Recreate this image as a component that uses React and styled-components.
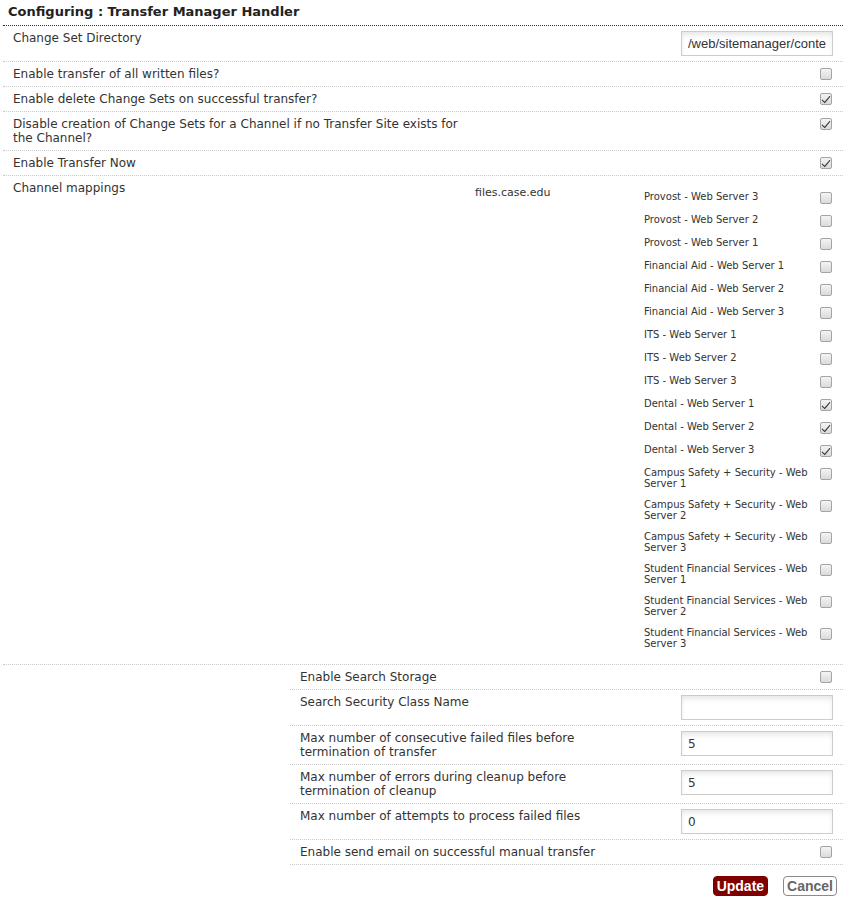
import React from "react";
import styled, { createGlobalStyle } from "styled-components";

const channels = [
  { name: "Provost - Web Server 3", on: false },
  { name: "Provost - Web Server 2", on: false },
  { name: "Provost - Web Server 1", on: false },
  { name: "Financial Aid - Web Server 1", on: false },
  { name: "Financial Aid - Web Server 2", on: false },
  { name: "Financial Aid - Web Server 3", on: false },
  { name: "ITS - Web Server 1", on: false },
  { name: "ITS - Web Server 2", on: false },
  { name: "ITS - Web Server 3", on: false },
  { name: "Dental - Web Server 1", on: true },
  { name: "Dental - Web Server 2", on: true },
  { name: "Dental - Web Server 3", on: true },
  { name: "Campus Safety + Security - Web Server 1", on: false },
  { name: "Campus Safety + Security - Web Server 2", on: false },
  { name: "Campus Safety + Security - Web Server 3", on: false },
  { name: "Student Financial Services - Web Server 1", on: false },
  { name: "Student Financial Services - Web Server 2", on: false },
  { name: "Student Financial Services - Web Server 3", on: false },
];

const Check = ({ on }) => (
  <CheckBox>
    {on && (
      <svg width="10" height="10" viewBox="0 0 10 10">
        <path d="M1.2 5.4 L3.6 7.8 L8.8 1.8 L9.4 2.6 L3.8 9.2 L0.6 6.2 Z" fill="#2b2b2b" />
      </svg>
    )}
  </CheckBox>
);

const App = () => {
  return (
    <>
      <GlobalStyle />
      <Page>
        <Title>Configuring : Transfer Manager Handler</Title>

        <Row>
          <Label>Change Set Directory</Label>
          <Control>
            <TextInput $wide defaultValue="/web/sitemanager/conte" />
          </Control>
        </Row>
        <Row>
          <Label>Enable transfer of all written files?</Label>
          <Control>
            <Check />
          </Control>
        </Row>
        <Row>
          <Label>Enable delete Change Sets on successful transfer?</Label>
          <Control>
            <Check on />
          </Control>
        </Row>
        <Row>
          <Label>
            Disable creation of Change Sets for a Channel if no Transfer Site
            exists for the Channel?
          </Label>
          <Control>
            <Check on />
          </Control>
        </Row>
        <Row>
          <Label>Enable Transfer Now</Label>
          <Control>
            <Check on />
          </Control>
        </Row>
        <Row>
          <Label>Channel mappings</Label>
          <Mapping>
            <Site>files.case.edu</Site>
            <ChannelList>
              {channels.map((c) => (
                <ChannelItem key={c.name}>
                  <ChannelName>{c.name}</ChannelName>
                  <ChannelCheck>
                    <Check on={c.on} />
                  </ChannelCheck>
                </ChannelItem>
              ))}
            </ChannelList>
          </Mapping>
        </Row>

        <SubTable>
          <SubRow>
            <Label>Enable Search Storage</Label>
            <Control>
              <Check />
            </Control>
          </SubRow>
          <SubRow>
            <Label>Search Security Class Name</Label>
            <Control>
              <TextInput defaultValue="" />
            </Control>
          </SubRow>
          <SubRow>
            <Label>
              Max number of consecutive failed files before termination of
              transfer
            </Label>
            <Control>
              <TextInput defaultValue="5" />
            </Control>
          </SubRow>
          <SubRow>
            <Label>
              Max number of errors during cleanup before termination of cleanup
            </Label>
            <Control>
              <TextInput defaultValue="5" />
            </Control>
          </SubRow>
          <SubRow>
            <Label>Max number of attempts to process failed files</Label>
            <Control>
              <TextInput defaultValue="0" />
            </Control>
          </SubRow>
          <SubRow>
            <Label>Enable send email on successful manual transfer</Label>
            <Control>
              <Check />
            </Control>
          </SubRow>
        </SubTable>

        <Buttons>
          <Button $primary>Update</Button>
          <Button>Cancel</Button>
        </Buttons>
      </Page>
    </>
  );
};

export default App;

const GlobalStyle = createGlobalStyle`
  body {
    margin: 0;
    background: #fff;
    font-family: "DejaVu Sans", Verdana, sans-serif;
    color: #333;
  }
`;

const Page = styled.div`
  width: 840px;
  margin-left: 3px;
  padding-bottom: 20px;
`;

const Title = styled.h1`
  margin: 0;
  height: 26px;
  padding: 4px 5px 0;
  box-sizing: border-box;
  font-size: 13px;
  line-height: 16px;
  font-weight: bold;
  color: #222;
  border-bottom: 1px dotted #7a1010;
`;

const Row = styled.div`
  display: grid;
  grid-template-columns: 467px 1fr;
  border-bottom: 1px dotted #c8c8c8;
`;

const Label = styled.div`
  padding: 5px 10px;
  font-size: 12px;
  line-height: 14px;
`;

const Control = styled.div`
  padding: 5px 10px 5px 0;
  display: flex;
  justify-content: flex-end;
  align-items: flex-start;
`;

const CheckBox = styled.span`
  display: inline-flex;
  align-items: center;
  justify-content: center;
  width: 12px;
  height: 12px;
  margin: 1px 1px 0 0;
  box-sizing: border-box;
  border: 1px solid #a4a4a4;
  border-radius: 2px;
  background: linear-gradient(#f4f4f4, #dadada);
`;

const TextInput = styled.input`
  width: 152px;
  height: 25px;
  box-sizing: border-box;
  border: 1px solid #cccccc;
  padding: 0 6px;
  background: #fff;
  box-shadow: inset 0 4px 6px -2px rgba(0, 0, 0, 0.12);
  font-family: ${(p) => (p.$wide ? '"Liberation Sans", Arial, sans-serif' : '"DejaVu Sans", Verdana, sans-serif')};
  font-size: ${(p) => (p.$wide ? "13px" : "12px")};
  color: #333;
  outline: none;
`;

const Mapping = styled.div`
  display: grid;
  grid-template-columns: 174px 1fr;
  padding: 10px 0;
`;

const Site = styled.div`
  padding: 0 5px;
  font-size: 11px;
  line-height: 13px;
`;

const ChannelList = styled.div`
  display: flex;
  flex-direction: column;
`;

const ChannelItem = styled.div`
  display: grid;
  grid-template-columns: 165px 1fr;
  align-items: start;
  min-height: 23px;
`;

const ChannelName = styled.div`
  padding: 5px 0;
  font-size: 10px;
  line-height: 11px;
`;

const ChannelCheck = styled.div`
  display: flex;
  justify-content: flex-end;
  padding: 5px 10px 0 0;
`;

const SubTable = styled.div`
  margin-left: 287px;
`;

const SubRow = styled.div`
  display: grid;
  grid-template-columns: 325px 1fr;
  border-bottom: 1px dotted #c8c8c8;
`;

const Buttons = styled.div`
  display: flex;
  justify-content: flex-end;
  gap: 15px;
  padding: 11px 6px 0 0;
`;

const Button = styled.button`
  height: 20px;
  padding: 0 3px;
  border-radius: 4px;
  font-family: "Liberation Sans", Arial, sans-serif;
  font-size: 14px;
  font-weight: bold;
  line-height: 18px;
  cursor: pointer;
  border: 1px solid ${(p) => (p.$primary ? "#7a0000" : "#8a8a8a")};
  background: ${(p) => (p.$primary ? "#800000" : "#fff")};
  color: ${(p) => (p.$primary ? "#fff" : "#666")};
`;
